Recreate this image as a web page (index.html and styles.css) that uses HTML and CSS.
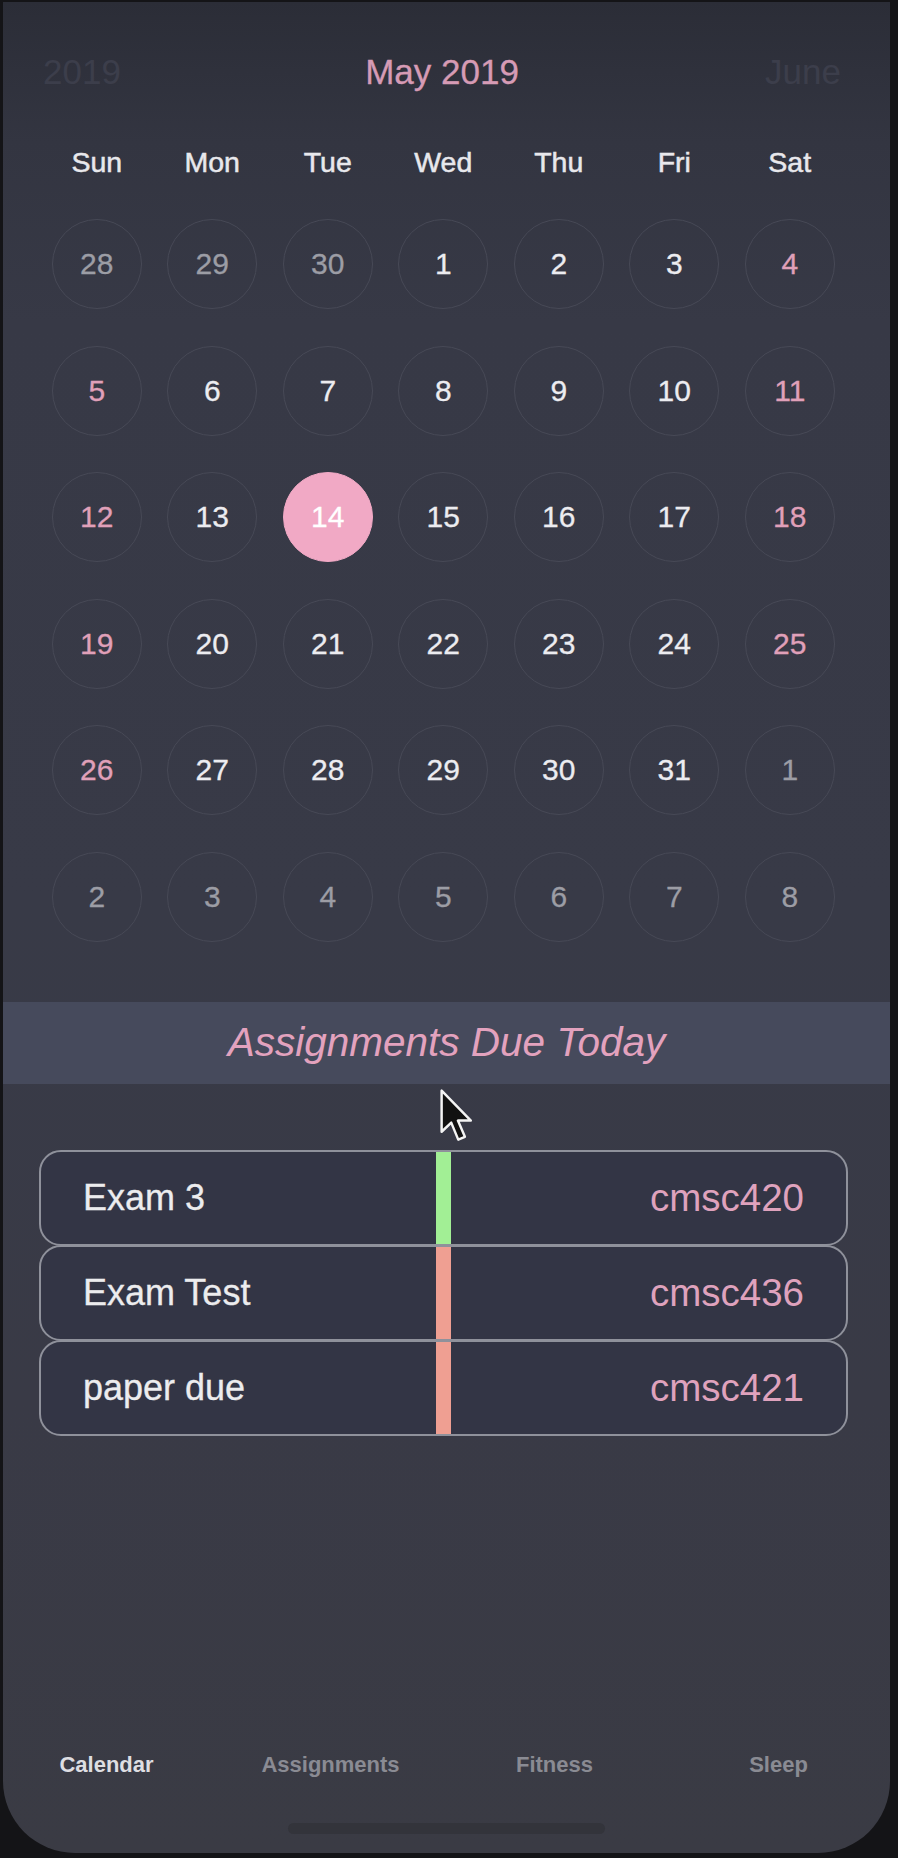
FILE: index.html
```html
<!DOCTYPE html>
<html>
<head>
<meta charset="utf-8">
<link rel="stylesheet" href="styles.css">
</head>
<body>
<div class="screen">
  <div class="month-nav">
    <span class="nav-side nav-prev">2019</span>
    <span class="nav-title">May 2019</span>
    <span class="nav-side nav-next">June</span>
  </div>

  <div class="weekdays">
    <span>Sun</span><span>Mon</span><span>Tue</span><span>Wed</span><span>Thu</span><span>Fri</span><span>Sat</span>
  </div>

  <div class="days">
    <span class="day other">28</span><span class="day other">29</span><span class="day other">30</span><span class="day">1</span><span class="day">2</span><span class="day">3</span><span class="day weekend">4</span>
    <span class="day weekend">5</span><span class="day">6</span><span class="day">7</span><span class="day">8</span><span class="day">9</span><span class="day">10</span><span class="day weekend">11</span>
    <span class="day weekend">12</span><span class="day">13</span><span class="day selected">14</span><span class="day">15</span><span class="day">16</span><span class="day">17</span><span class="day weekend">18</span>
    <span class="day weekend">19</span><span class="day">20</span><span class="day">21</span><span class="day">22</span><span class="day">23</span><span class="day">24</span><span class="day weekend">25</span>
    <span class="day weekend">26</span><span class="day">27</span><span class="day">28</span><span class="day">29</span><span class="day">30</span><span class="day">31</span><span class="day other">1</span>
    <span class="day other">2</span><span class="day other">3</span><span class="day other">4</span><span class="day other">5</span><span class="day other">6</span><span class="day other">7</span><span class="day other">8</span>
  </div>

  <div class="band">Assignments Due Today</div>

  <div class="cards">
    <div class="card">
      <span class="card-title">Exam 3</span>
      <span class="card-bar bar-green"></span>
      <span class="card-course">cmsc420</span>
    </div>
    <div class="card">
      <span class="card-title">Exam Test</span>
      <span class="card-bar bar-red"></span>
      <span class="card-course">cmsc436</span>
    </div>
    <div class="card">
      <span class="card-title">paper due</span>
      <span class="card-bar bar-red"></span>
      <span class="card-course">cmsc421</span>
    </div>
  </div>

  <div class="tabbar">
    <div class="tabs">
      <span class="tab active">Calendar</span>
      <span class="tab">Assignments</span>
      <span class="tab">Fitness</span>
      <span class="tab">Sleep</span>
    </div>
    <div class="home-indicator"></div>
  </div>

  <svg class="cursor" width="35" height="56" viewBox="0 0 20 32">
    <path d="M1.5 1.5 L1.5 25 L7 19.8 L11 29.5 L14.8 27.9 L10.8 18.6 L18.2 18.6 Z" fill="#111" stroke="#f4f4f4" stroke-width="1.4" stroke-linejoin="round"/>
  </svg>
</div>
</body>
</html>
```

FILE: styles.css
```css
* { box-sizing: border-box; }

html, body {
  margin: 0;
  padding: 0;
  background: #141417;
}

body {
  width: 898px;
  height: 1858px;
  overflow: hidden;
  font-family: "Liberation Sans", Arial, sans-serif;
}

.screen {
  position: relative;
  margin: 2px 0 0 3px;
  width: 887px;
  height: 1851px;
  border-radius: 0 0 72px 72px;
  overflow: hidden;
  display: flex;
  flex-direction: column;
  background: linear-gradient(180deg, #2b2d37 0px, #333541 140px, #373946 320px, #383a47 900px, #393a46 1400px, #3a3b44 1851px);
}

.month-nav {
  display: grid;
  grid-template-columns: 1fr auto 1fr;
  align-items: center;
  height: 40px;
  margin-top: 50px;
  padding: 0 49px 0 40px;
  font-size: 35px;
}

.nav-side { color: #3c3e4b; }
.nav-prev { justify-self: start; }
.nav-next { justify-self: end; }
.nav-title { color: #d69bb5; -webkit-text-stroke: 0.3px #d69bb5; }

.weekdays {
  display: grid;
  grid-template-columns: repeat(7, 115.5px);
  margin: 53px 0 0 36px;
  height: 34px;
  line-height: 34px;
  font-size: 28.5px;
  color: #e8e8ec;
  -webkit-text-stroke: 0.5px #e8e8ec;
  text-align: center;
}

.days {
  display: grid;
  grid-template-columns: repeat(7, 115.5px);
  grid-auto-rows: 90px;
  row-gap: 36.6px;
  margin: 40px 0 0 36px;
  justify-items: center;
}

.day {
  width: 90px;
  height: 90px;
  border-radius: 50%;
  border: 1.5px solid #474956;
  display: flex;
  align-items: center;
  justify-content: center;
  font-size: 30px;
  color: #ececf0;
  -webkit-text-stroke: 0.3px currentColor;
}

.day.other { color: #9c9da5; }
.day.weekend { color: #e0a0b9; }
.day.selected {
  background: #f1a9c5;
  border-color: #f1a9c5;
  color: #ffffff;
}

.band {
  margin-top: 60px;
  height: 82px;
  background: #464a5c;
  display: flex;
  align-items: center;
  justify-content: center;
  font-size: 40.5px;
  font-style: italic;
  color: #e3a2be;
}

.cards {
  margin: 66px 0 0 36px;
  width: 809px;
  display: flex;
  flex-direction: column;
}

.card {
  height: 96px;
  margin-top: -1px;
  border: 2px solid #8f919b;
  border-radius: 22px;
  background: #333545;
  display: grid;
  grid-template-columns: 1fr 15px 1fr;
  align-items: center;
  font-size: 36px;
}

.card:first-child { margin-top: 0; }

.card-title {
  padding-left: 42px;
  color: #ececee;
  -webkit-text-stroke: 0.3px #ececee;
}

.card-bar {
  align-self: stretch;
}

.bar-green { background: #a2ef95; }
.bar-red { background: #ef9f92; }

.card-course {
  justify-self: end;
  padding-right: 42px;
  color: #dfa2bd;
  font-size: 38.5px;
}

.tabbar {
  margin-top: auto;
  height: 108px;
  display: flex;
  flex-direction: column;
  align-items: center;
}

.tabs {
  display: grid;
  grid-template-columns: repeat(4, 224px);
  justify-content: center;
  width: 100%;
  padding-right: 8px;
  height: 40px;
  line-height: 40px;
  text-align: center;
  font-size: 22px;
  font-weight: bold;
  color: #8a8b93;
}

.tab.active { color: #dedee2; }

.home-indicator {
  margin-top: 38px;
  width: 317px;
  height: 11px;
  border-radius: 6px;
  background: #33343b;
}

.cursor {
  position: absolute;
  left: 436px;
  top: 1086px;
}
```
